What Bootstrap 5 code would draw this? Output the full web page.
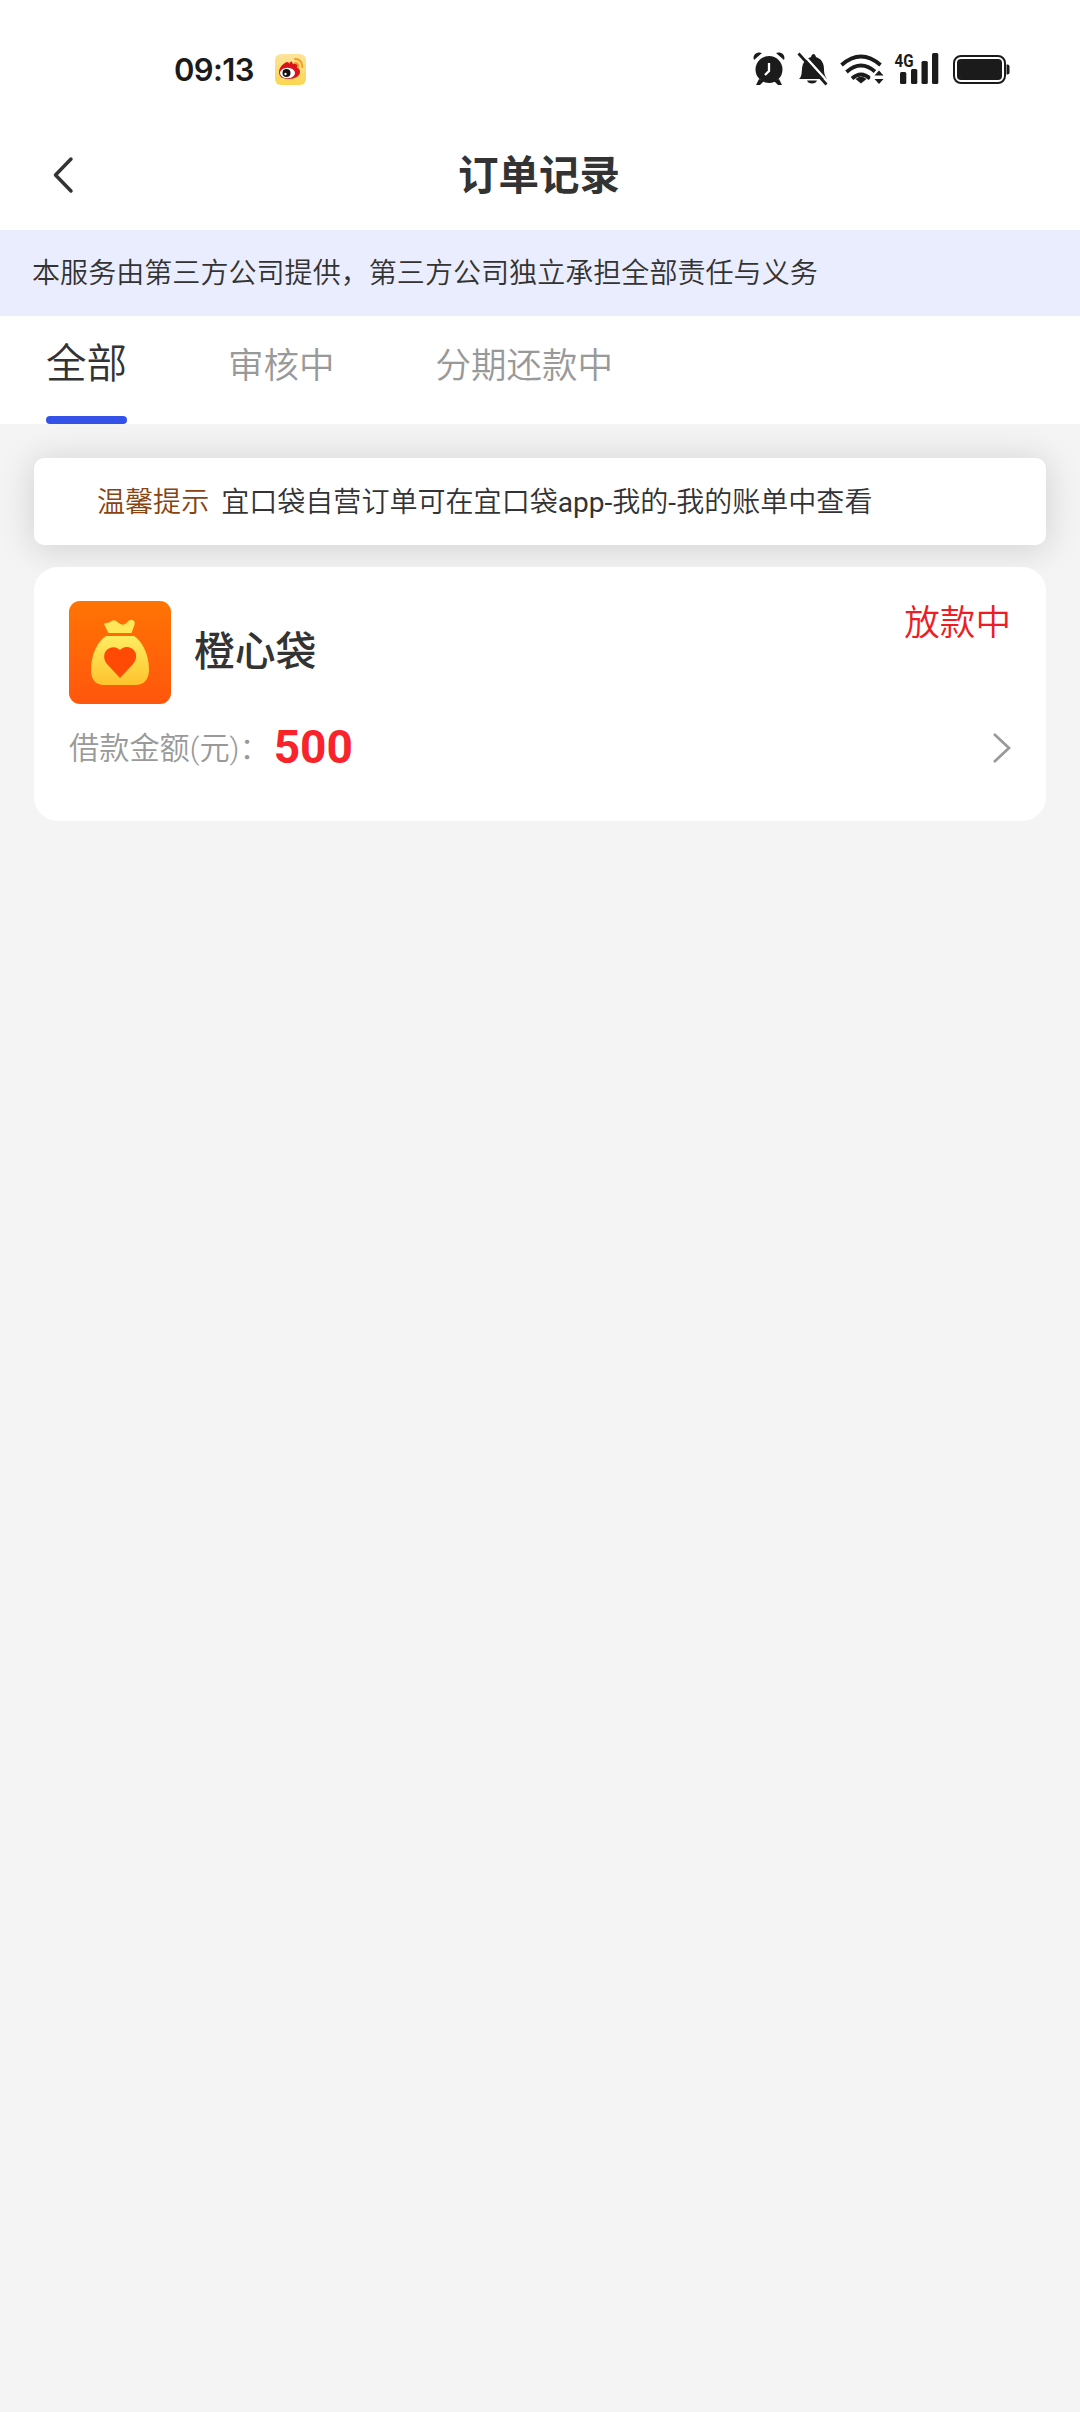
<!DOCTYPE html>
<html lang="zh-CN">
<head>
<meta charset="utf-8">
<meta name="viewport" content="width=device-width, initial-scale=1">
<title>订单记录</title>
<link href="https://cdn.jsdelivr.net/npm/bootstrap@5.3.0/dist/css/bootstrap.min.css" rel="stylesheet">
<style>
body{font-family:Roboto,"Noto Sans CJK SC",sans-serif;background:#f4f4f4;color:#333;min-height:2412px;line-height:1;font-weight:350}
.latin{font-weight:400}
.statusbar{height:138px;padding:0 70px 0 174px}
.clock{font:600 31px/1 Inter,sans-serif;color:#1b1b1b;width:81px;letter-spacing:-.6px}
.weibo{margin-left:20px}
.titlebar{height:92px;padding:0 52px 18px}
.titlebar h1{font-size:40.500px;font-weight:700;line-height:1;padding-top:3px}
.service{height:86px;background:#eaedfd;font-size:28.07px;padding:2px 32px 0}
.tabs-row{height:108px;padding-left:46px;gap:101px}
.tabs-row .nav-link{color:#999;font-size:35.5px;line-height:1;height:108px;padding:33px 0 0}
.tabs-row .nav-link.active{color:#333;font-size:40.5px;padding-top:28px}
.tabs-row .nav-link.active::after{content:"";display:block;height:8px;border-radius:4px;background:#3452e7;margin-top:31.5px}
.orders{padding:34px 34px 0}
.tips{height:87px;border-radius:10px;box-shadow:0 3px 34px 3px rgba(0,0,0,.13);font-size:28.05px;padding:3px 63px 0}
.tips b{color:#884311;font-weight:350;margin-right:12px}
.order{height:254px;border-radius:24px;padding:34px 34px 0 35px;margin-top:22px}
.order-name{font-size:40.8px;font-weight:500;margin-left:23px}
.status{font-size:35.6px;color:#ee1c25;margin:5px 1px 0 0}
.amount-row{height:88px}
.amount-label{font-size:30.2px;color:#999;white-space:nowrap;padding-top:2px}
.amount{font:700 46px/1 Roboto,sans-serif;color:#f8232b;margin-left:4px;padding-bottom:2px}
</style>
</head>
<body>
<header class="bg-white">
  <div class="statusbar d-flex align-items-center">
    <span class="clock">09:13</span>
    <svg class="weibo" width="31" height="31" viewBox="0 0 31 31">
      <defs><linearGradient id="wb" x2="0" y2="1"><stop stop-color="#fbe49b"/><stop offset="1" stop-color="#fbd650"/></linearGradient></defs>
      <rect width="31" height="31" rx="6" fill="url(#wb)"/>
      <path d="M4 18C4 13 9 9 12 8c2 0 2 1 2 2 1-2 2-3 3-2l1 2c3-2 5-1 5 1l-1 3c2 0 3 2 3 4 0 4-5 7-11 7S4 23 4 18Z" fill="#d9141a"/>
      <ellipse cx="12.500" cy="19" rx="7.500" ry="5.300" fill="#fff"/><circle cx="11.500" cy="19" r="4" fill="#111"/><circle cx="10.500" cy="20" r="1.200" fill="#fff"/>
      <path d="M20 5q7 0 7.300 8M20 9q3.500 0 3.500 4" fill="none" stroke="#f29b25" stroke-width="1.800" stroke-linecap="round"/>
    </svg>
    <svg class="ms-auto" width="260" height="40" viewBox="750 50 260 40" fill="#1b1b1b">
      <circle cx="769" cy="70.500" r="13.500"/>
      <path d="M754 61c-2-5 3-9 8-7zM784 61c2-5-3-9-8-7zM759 80l-3 6h4l4-4zM779 80l3 6h-4l-4-4z"/>
      <path d="M769 64v8l-4 4" fill="none" stroke="#fff" stroke-width="2.300"/>
      <path d="M799 80c4-3 2-10 4-15 2-4 5-6 8-7 1-4 4-4 5 0 6 2 8 7 8 12 0 5 1 7 3 10zM807 81.500h10q-1 3-5 3t-5-3Z"/>
      <path d="M800.500 52.500l28 31" fill="none" stroke="#fff" stroke-width="2.500"/>
      <path d="M798.500 54.500l28 31" fill="none" stroke="#1b1b1b" stroke-width="2.700"/>
      <g fill="none" stroke="#1b1b1b" stroke-width="3.800"><path d="M841.500 66q19.500-17 39 0M846.500 73q14.500-13 29 0M852 79.500q9-8 18 0" /></g>
      <path d="M855.500 80q5.500-4.500 11 0L861 84.500Z"/>
      <path d="M870 78l9-10 9 10v9h-12z" fill="#fff"/><path d="M874.500 76.500h9l-4.500-5zM874.500 80h9l-4.500 5z"/>
      <text transform="translate(894.500 67.500) scale(.82 1)" font-family="Roboto,sans-serif" font-size="18.500" font-weight="700">4G</text>
      <rect x="900" y="73" width="6.300" height="12" rx="1.500"/><rect x="911" y="70" width="6.300" height="15" rx="1.500"/><rect x="921.500" y="62" width="6.300" height="23" rx="1.500"/><rect x="932" y="54" width="6.300" height="31" rx="1.500"/>
      <rect x="954" y="57" width="51" height="27" rx="7" fill="none" stroke="#1b1b1b" stroke-width="2"/><rect x="957" y="60" width="45" height="21" rx="4"/><path d="M1006.500 65.500h1q2 0 2 2v6q0 2-2 2h-1z"/>
    </svg>
  </div>
  <div class="titlebar d-flex align-items-center">
    <svg width="22" height="38" viewBox="0 0 22 38"><path d="M19 3L3.500 19 19 35" fill="none" stroke="#333" stroke-width="3.500" stroke-linecap="round" stroke-linejoin="round"/></svg>
    <h1 class="flex-fill text-center mb-0 pe-4">订单记录</h1>
  </div>
</header>
<main>
  <div class="service d-flex align-items-center text-nowrap">本服务由第三方公司提供，第三方公司独立承担全部责任与义务</div>
  <nav class="tabs-row nav flex-nowrap bg-white">
    <a class="nav-link active" href="#">全部</a>
    <a class="nav-link" href="#">审核中</a>
    <a class="nav-link" href="#">分期还款中</a>
  </nav>
  <section class="orders">
    <div class="tips bg-white d-flex align-items-center text-nowrap"><b>温馨提示</b><span>宜口袋自营订单可在宜口袋<span class="latin">app-</span>我的<span class="latin">-</span>我的账单中查看</span></div>
    <article class="order bg-white">
      <div class="d-flex">
        <svg width="102" height="103" viewBox="0 0 102 103">
          <defs><linearGradient id="or" x2="0" y2="1"><stop stop-color="#ff7404"/><stop offset="1" stop-color="#ff560d"/></linearGradient><linearGradient id="ye" x2="0" y2="1"><stop stop-color="#ffed61"/><stop offset="1" stop-color="#fdc32d"/></linearGradient></defs>
          <rect width="102" height="103" rx="11" fill="url(#or)"/>
          <path d="M39.500 32L35.500 24q-1-2 2-2 3 0 5-2 3-2 6 1 5 5 9 1 3-4 6-3 3 1 2 5l-3 8Z" fill="#ffe75a"/>
          <path d="M37 35h28c8 5 15 18 15 34 0 10-6 15-13 15H35c-8 0-13-5-13-15 0-16 7-29 15-34Z" fill="url(#ye)"/>
          <path d="M51 77L38 63c-5-6-3-14 3-16 4-2 8 0 10 2 3-3 7-4 11-2 6 3 7 10 2 16Z" fill="#ff4a05"/>
        </svg>
        <div class="order-name align-self-center">橙心袋</div>
        <div class="status ms-auto">放款中</div>
      </div>
      <div class="amount-row d-flex align-items-center">
        <span class="amount-label">借款金额(元)：</span><span class="amount">500</span>
        <svg class="ms-auto" width="20" height="32" viewBox="0 0 20 32"><path d="M2 2L17 16 2 30" fill="none" stroke="#999" stroke-width="2.700"/></svg>
      </div>
    </article>
  </section>
</main>
<script src="https://cdn.jsdelivr.net/npm/bootstrap@5.3.0/dist/js/bootstrap.bundle.min.js"></script>
</body>
</html>
